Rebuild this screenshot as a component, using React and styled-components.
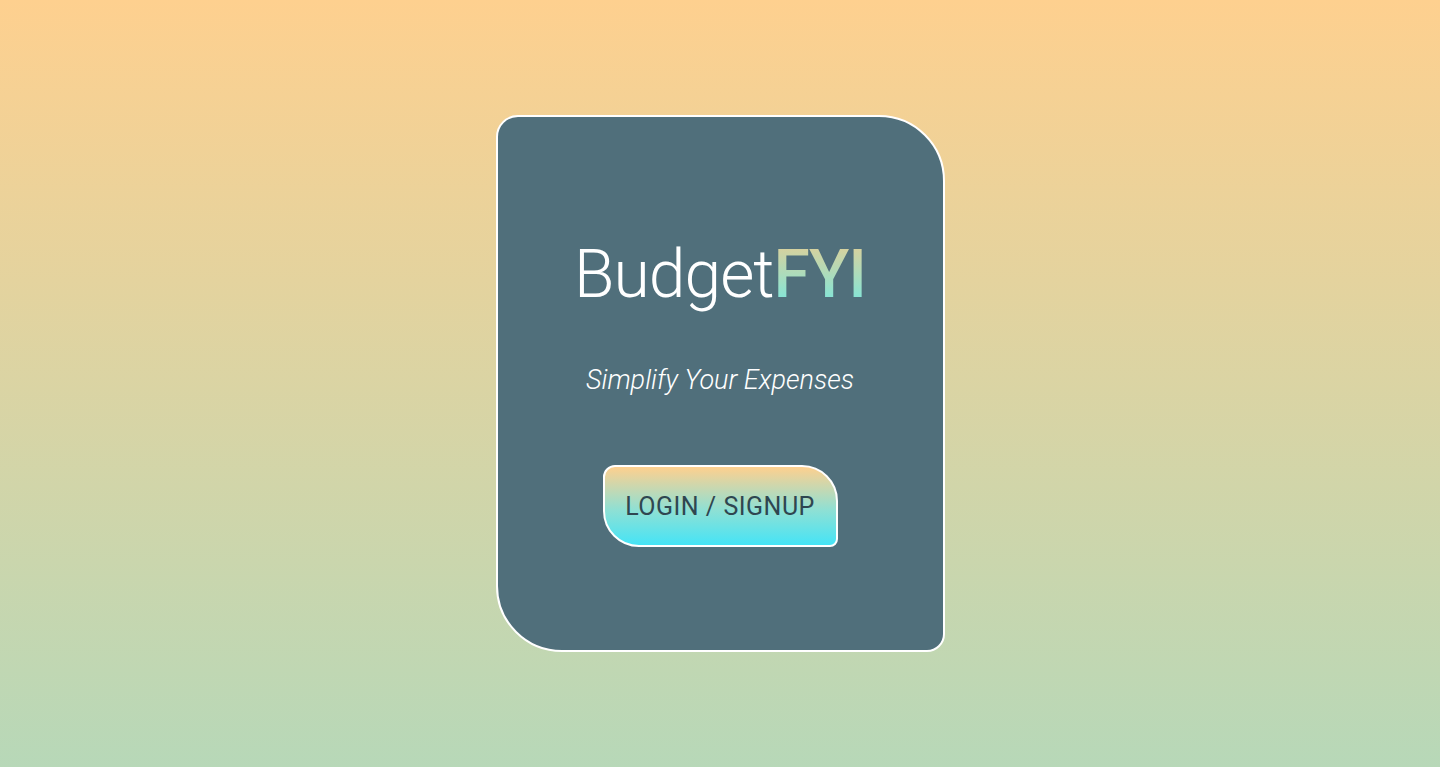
import React from "react";
import styled, { createGlobalStyle } from "styled-components";

const GlobalStyle = createGlobalStyle`
  html, body {
    margin: 0;
    padding: 0;
  }
  body {
    font-family: Roboto, "Liberation Sans", sans-serif;
  }
  * {
    box-sizing: border-box;
  }
`;

const Page = styled.main`
  height: 767px;
  display: flex;
  align-items: center;
  justify-content: center;
  background: linear-gradient(180deg, #fed08f 0%, #b7d8b8 100%);
`;

const Card = styled.section`
  width: 449px;
  height: 537px;
  background: #506f7b;
  border: 2px solid #ffffff;
  border-radius: 22px 66px 18px 66px;
  display: flex;
  flex-direction: column;
  align-items: center;
  padding-top: 120px;
`;

const Title = styled.h1`
  margin: 0;
  font-size: 66px;
  font-weight: 300;
  line-height: 76px;
  letter-spacing: -1px;
  color: #ffffff;
`;

const Accent = styled.span`
  font-weight: 500;
  background: linear-gradient(180deg, #ddd09a 10%, #7be7dd 90%);
  -webkit-background-clip: text;
  background-clip: text;
  color: transparent;
`;

const Tagline = styled.p`
  margin: 52px 0 0;
  font-size: 27px;
  font-style: italic;
  font-weight: 300;
  line-height: 30px;
  color: #ffffff;
`;

const AuthButton = styled.button`
  margin-top: 70px;
  width: 235px;
  height: 82px;
  border: 2px solid #ffffff;
  border-radius: 12px 36px 8px 36px;
  background: linear-gradient(180deg, #fed08f 0%, #8fe0d4 55%, #45e4f6 100%);
  font-family: Roboto, "Liberation Sans", sans-serif;
  font-size: 25px;
  font-weight: 400;
  letter-spacing: 0.5px;
  color: #2f4650;
  cursor: pointer;
`;

const App = () => {
  return (
    <>
      <GlobalStyle />
      <Page>
        <Card>
          <Title>
            Budget<Accent>FYI</Accent>
          </Title>
          <Tagline>Simplify Your Expenses</Tagline>
          <AuthButton type="button">LOGIN / SIGNUP</AuthButton>
        </Card>
      </Page>
    </>
  );
};

export default App;
